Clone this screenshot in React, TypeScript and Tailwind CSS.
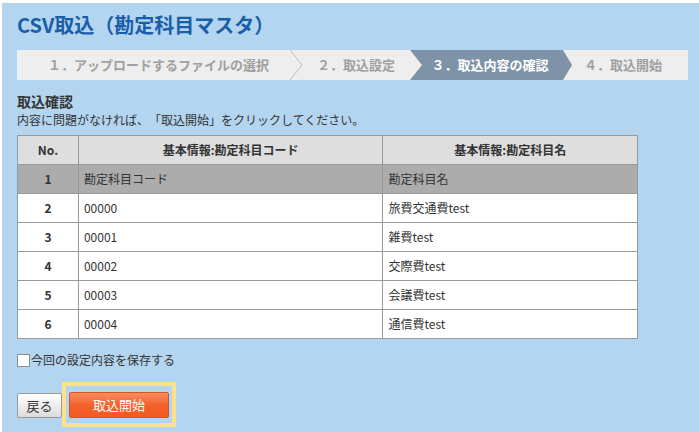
import React from "react";

const rows: [string, string, string][] = [
  ["2", "00000", "旅費交通費test"],
  ["3", "00001", "雑費test"],
  ["4", "00002", "交際費test"],
  ["5", "00003", "会議費test"],
  ["6", "00004", "通信費test"],
];

export default function App() {
  return (
    <div
      className="w-[699px] h-[432px] bg-white pt-[3px] pl-[2px] overflow-hidden [text-spacing-trim:space-all]"
      style={{ fontFamily: '"Noto Sans CJK JP", "Noto Sans", sans-serif' }}
    >
      <div className="h-[429px] bg-[#b3d5ef] pl-[15px] pt-[8px]">
        <h1 className="text-[20px] leading-[28px] font-bold text-[#1a5ea8]">
          CSV取込（勘定科目マスタ）
        </h1>

        {/* Steps */}
        <div className="mt-[11px] flex h-[30px] w-[671px] bg-[#eeeeee] text-[13px] font-bold text-[#a0a0a0]">
          <div className="flex w-[273px] items-center justify-center pl-[10px]">
            １．アップロードするファイルの選択
          </div>
          <svg width="12" height="30" viewBox="0 0 12 30" className="shrink-0">
            <polyline points="0,0 12,15 0,30" fill="none" stroke="#bdbdbd" strokeWidth="1" />
          </svg>
          <div className="flex w-[108px] items-center justify-center">２．取込設定</div>
          <div className="flex w-[162px] items-center justify-center bg-[#7f93a8] text-white pr-[2px] [clip-path:polygon(0_0,153px_0,162px_50%,153px_100%,0_100%,12px_50%)]">
            ３．取込内容の確認
          </div>
          <div className="flex flex-1 items-center justify-center pr-[14px]">４．取込開始</div>
        </div>

        <h2 className="mt-[12px] text-[14px] leading-[18px] font-bold text-[#333333]">取込確認</h2>
        <p className="mt-[2px] text-[12px] leading-[16px] text-[#333333]">
          内容に問題がなければ、「取込開始」をクリックしてください。
        </p>

        <table className="mt-[7px] w-[621px] border-collapse text-[12px] text-[#333333]">
          <colgroup>
            <col className="w-[61px]" />
            <col className="w-[305px]" />
            <col className="w-[255px]" />
          </colgroup>
          <thead>
            <tr className="h-[29px] bg-[#dedede]">
              <th className="border border-[#999999] text-center font-bold">No.</th>
              <th className="border border-[#999999] text-center font-bold">基本情報:勘定科目コード</th>
              <th className="border border-[#999999] text-center font-bold">基本情報:勘定科目名</th>
            </tr>
          </thead>
          <tbody>
            <tr className="h-[29px] bg-[#acacac]">
              <td className="border border-[#999999] text-center font-bold">1</td>
              <td className="border border-[#999999] pl-[5px]">勘定科目コード</td>
              <td className="border border-[#999999] pl-[5px]">勘定科目名</td>
            </tr>
            {rows.map(([n, code, name]) => (
              <tr key={n} className="h-[29px] bg-white">
                <td className="border border-[#999999] text-center font-bold">{n}</td>
                <td className="border border-[#999999] pl-[5px]">{code}</td>
                <td className="border border-[#999999] pl-[5px]">{name}</td>
              </tr>
            ))}
          </tbody>
        </table>

        <label className="mt-[13px] flex h-[16px] items-center text-[12px] text-[#333333]">
          <span className="mr-[1px] inline-block h-[13px] w-[13px] border border-[#8f8f8f] bg-white" />
          今回の設定内容を保存する
        </label>

        <div className="mt-[14px] flex items-end">
          <button className="mb-[9px] h-[25px] w-[45px] rounded-[2px] border border-[#9a9a9a] bg-gradient-to-b from-[#ffffff] to-[#dcdcdc] text-[13px] text-[#333333]">
            戻る
          </button>
          <div className="border-[4px] border-[#fbe28d] px-[3px] pt-[5px] pb-[5px]">
            <button className="h-[26px] w-[100px] rounded-[2px] border border-[#d9531f] bg-gradient-to-b from-[#f78b60] via-[#f4622c] to-[#f25a22] text-[13px] text-white">
              取込開始
            </button>
          </div>
        </div>
      </div>
    </div>
  );
}
